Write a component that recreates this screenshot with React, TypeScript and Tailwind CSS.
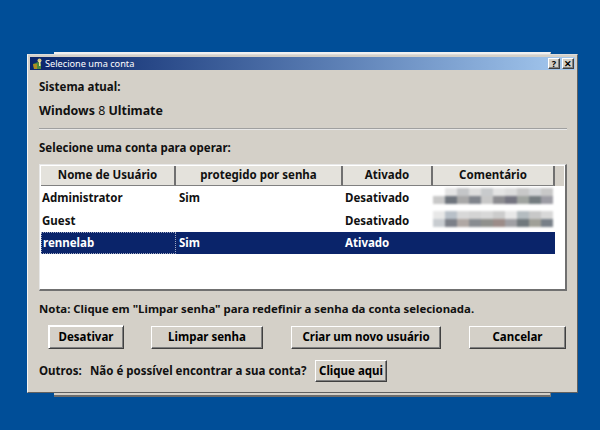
const FONT = "font-['Noto_Sans','Liberation_Sans',sans-serif]";

const RAISED =
  "border border-t-white border-l-white border-r-[#404040] border-b-[#404040] shadow-[inset_-1px_-1px_0_#808080]";

const COLUMNS = [
  { label: "Nome de Usuário", width: "w-[135px]" },
  { label: "protegido por senha", width: "w-[167px]" },
  { label: "Ativado", width: "w-[90px]" },
  { label: "Comentário", width: "w-[122px]" },
];

const ROWS = [
  { name: "Administrator", prot: "Sim", active: "Desativado", blur: ["#ffffff", "#e4e4e4", "#c4c6c8", "#dedede", "#c8cacc", "#e4e4e4", "#dcdcdc", "#c8c8c8", "#d4d6d8", "#c8c8c8"], blur2: ["#c8c8c8", "#6e747c", "#a8a8a8", "#80848c", "#c8c8c8", "#8c8c90", "#747480", "#a0a4a0", "#747c80", "#9c9ca4"] },
  { name: "Guest", prot: "", active: "Desativado", blur: ["#e8e8e8", "#b8c0c8", "#d8d8d8", "#d4d4d4", "#d8d8d8", "#cccccc", "#e8e8e8", "#b4bcc0", "#c8c8c8", "#d8d8d8"], blur2: ["#c8ccd0", "#7c8088", "#b0a8a4", "#888c90", "#90908c", "#9c8c88", "#a0a0a4", "#70787c", "#a0a098", "#788088"] },
];

function BlurBlock({ top, bottom }: { top: string[]; bottom: string[] }) {
  return (
    <div className="mb-[3px] flex flex-col blur-[1px]">
      <div className="flex">
        {top.map((c, i) => (
          <div key={i} className="h-[8px] w-[12px] shrink-0" style={{ backgroundColor: c }} />
        ))}
      </div>
      <div className="flex">
        {bottom.map((c, i) => (
          <div key={i} className="h-[8px] w-[12px] shrink-0" style={{ backgroundColor: c }} />
        ))}
      </div>
    </div>
  );
}

function Btn({ label, className }: { label: string; className: string }) {
  return (
    <div className={`flex shrink-0 items-center justify-center bg-[#d4d0c8] text-[11.5px] font-bold text-black ${RAISED} ${className}`}>
      {label}
    </div>
  );
}

export default function App() {
  return (
    <div className={`relative h-[430px] w-[600px] overflow-hidden bg-[#004e98] pl-[27px] pt-[54px] ${FONT}`}>
      {/* janela atras do dialogo */}
      <div className="absolute left-[54px] top-[52px] h-[345px] w-[497px] border-b-[2px] border-r border-t-[2px] border-b-[#6c6c6c] border-r-[#808080] border-t-[#f0f0f0] bg-[#d4d0c8]" />

      {/* dialogo */}
      <div className="relative flex h-[339px] w-[551px] flex-col border border-l-[#f4f4f4] border-t-[#dcdcdc] border-r-[#606060] border-b-[#606060] bg-[#d4d0c8] p-[2px]">
        {/* barra de titulo */}
        <div className="flex h-[13px] shrink-0 items-center bg-gradient-to-r from-[#0a246a] to-[#a6caf0] pl-[2px] pr-[1px]">
          <svg width="11" height="12" viewBox="0 0 11 12" className="shrink-0">
            <path d="M1 6 L6 4 L9 6 L9 11 L2 11 Z" fill="#4f8a3a" />
            <path d="M1 6 L5 6 L5 11 L2 11 Z" fill="#b08a20" />
            <circle cx="7.5" cy="2.5" r="2" fill="#d8c880" />
            <rect x="7" y="3" width="1.5" height="5" fill="#f0e0a0" />
          </svg>
          <span className="ml-[2px] text-[9.2px] leading-none text-white">Selecione uma conta</span>
          <div className="ml-auto flex gap-[2px]">
            <div className={`flex h-[11px] w-[12px] items-center justify-center bg-[#d4d0c8] text-[9px] font-bold leading-none text-black ${RAISED}`}>?</div>
            <div className={`flex h-[11px] w-[12px] items-center justify-center bg-[#d4d0c8] text-[9px] font-bold leading-none text-black ${RAISED}`}>✕</div>
          </div>
        </div>

        <div className="flex flex-1 flex-col pl-[9px] pr-[7px] text-[11.5px] font-bold text-[#111]">
          <div className="mt-[9px] h-[16px] leading-[16px]">Sistema atual:</div>
          <div className="mt-[7px] h-[18px] text-[12.4px] leading-[18px]">
            Windows <span className="font-normal">8</span> Ultimate
          </div>
          <div className="mt-[8px] h-[2px] w-[528px] border-b border-t border-b-[#e8e8e8] border-t-[#a0a0a0]" />
          <div className="mt-[10px] h-[16px] leading-[16px]">Selecione uma conta para operar:</div>

          {/* tabela */}
          <div className="mt-[8px] h-[127px] w-[528px] border border-b-[2px] border-r-[2px] border-b-[#707070] border-l-[#e8e8e8] border-r-[#707070] border-t-[#e8e8e8] bg-white p-[1px]">
            <div className="flex h-[20px] bg-[#d4d0c8]">
              {COLUMNS.map((c) => (
                <div key={c.label} className={`flex h-[20px] items-center justify-center border-b border-r-[2px] border-b-[#808080] border-r-[#707070] bg-[#e4e2dc] pb-[1px] text-[11.5px] ${c.width}`}>
                  {c.label}
                </div>
              ))}
            </div>
            {ROWS.map((r) => (
              <div key={r.name} className="flex h-[23px] items-center text-[11.5px]">
                <div className="w-[135px] pl-[1px]">{r.name}</div>
                <div className="w-[167px] pl-[3px]">{r.prot}</div>
                <div className="w-[90px] pl-[2px]">{r.active}</div>
                <div className="w-[122px]">
                  <BlurBlock top={r.blur} bottom={r.blur2} />
                </div>
              </div>
            ))}
            <div className="flex h-[22px] w-[514px] items-center bg-[#0a246a] text-[11.5px] text-white">
              <div className="flex h-full w-[135px] items-center border border-dotted border-[#a0a8c0] pl-[1px]">rennelab</div>
              <div className="w-[167px] pl-[3px]">Sim</div>
              <div className="w-[90px] pl-[2px]">Ativado</div>
            </div>
          </div>

          <div className="mt-[10px] h-[16px] text-[11.4px] leading-[16px]">Nota: Clique em "Limpar senha" para redefinir a senha da conta selecionada.</div>

          <div className="mt-[8px] flex items-center">
            <Btn label="Desativar" className="ml-[9px] h-[24px] w-[76px] shadow-[inset_1px_1px_0_#fff,inset_-1px_-1px_0_#808080]" />
            <Btn label="Limpar senha" className="ml-[27px] h-[23px] w-[112px]" />
            <Btn label="Criar um novo usuário" className="ml-[28px] h-[23px] w-[150px]" />
            <Btn label="Cancelar" className="ml-[28px] h-[23px] w-[97px]" />
          </div>

          <div className="mt-[11px] flex h-[22px] items-center">
            <span className="w-[51px] shrink-0">Outros:</span>
            <span className="w-[225px] shrink-0">Não é possível encontrar a sua conta?</span>
            <Btn label="Clique aqui" className="h-[22px] w-[72px]" />
          </div>
        </div>
      </div>
    </div>
  );
}
